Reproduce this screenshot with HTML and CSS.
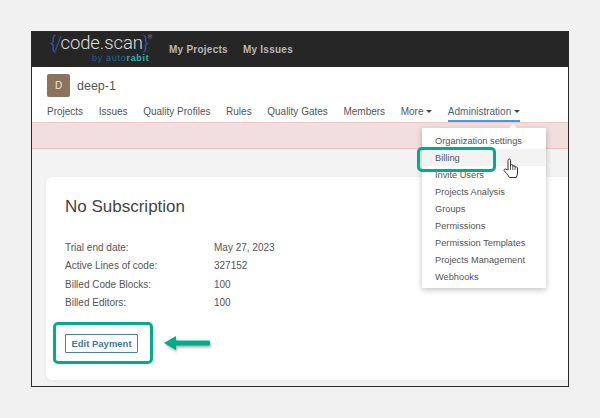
FILE: index.html
```html
<!DOCTYPE html>
<html>
<head>
    <meta charset="utf-8">
    <title>Billing</title>
    <link rel="stylesheet" href="styles.css">
</head>
<body>
    <div class="frame">
        <div class="topbar">
            <div class="logo">
                <div class="logo-main"><span class="brace">{</span><span class="brace">/</span>code.scan<span class="brace">}</span><sup>®</sup></div>
                <div class="logo-sub">by <span class="auto">auto</span><span class="rabit">rabit</span></div>
            </div>
            <a class="top-link">My Projects</a>
            <a class="top-link">My Issues</a>
        </div>

        <div class="org-header">
            <div class="org-title">
                <span class="avatar">D</span>
                <span class="org-name">deep-1</span>
            </div>
            <nav class="org-nav">
                <a>Projects</a>
                <a>Issues</a>
                <a>Quality Profiles</a>
                <a>Rules</a>
                <a>Quality Gates</a>
                <a>Members</a>
                <a>More <i class="caret"></i></a>
                <a class="active">Administration <i class="caret"></i></a>
            </nav>
        </div>

        <div class="banner"></div>

        <div class="content">
            <div class="card">
                <h2>No Subscription</h2>
                <dl class="info">
                    <dt>Trial end date:</dt><dd>May 27, 2023</dd>
                    <dt>Active Lines of code:</dt><dd>327152</dd>
                    <dt>Billed Code Blocks:</dt><dd>100</dd>
                    <dt>Billed Editors:</dt><dd>100</dd>
                </dl>
                <button class="edit-btn">Edit Payment</button>
            </div>
        </div>

        <div class="menu-tip"></div>
        <ul class="menu">
            <li>Organization settings</li>
            <li class="hover">Billing</li>
            <li>Invite Users</li>
            <li>Projects Analysis</li>
            <li>Groups</li>
            <li>Permissions</li>
            <li>Permission Templates</li>
            <li>Projects Management</li>
            <li>Webhooks</li>
        </ul>
    </div>

    <!-- annotations on top of the screenshot -->
    <div class="mark mark-billing"></div>
    <div class="mark mark-edit"></div>

    <svg class="arrow" width="50" height="20" viewBox="0 0 50 20">
        <path d="M1 9 L13 2 L13 6.500 L46.500 6.500 Q48 9 46.500 11.500 L13 11.500 L13 16 Z" fill="#00ac8c"/>
    </svg>

    <svg class="cursor" width="16" height="21" viewBox="0 0 16 21">
        <path d="M5 12 L5 2.500 Q5 1 6.300 1 Q7.500 1 7.500 2.500 L7.500 8 L7.500 6.800 Q8.700 6 9.800 7 L9.800 8.200 Q11 7.200 12 8.300 L12 9 Q13.500 8.400 14.500 9.700 L14.500 15 Q14.500 17 13.200 19.500 L6.300 19.500 Q5.500 17.500 3.500 15.500 L1 12.500 Q1 10.800 2.800 11 Z" fill="#fff" stroke="#333" stroke-width="1" stroke-linejoin="round"/>
        <path d="M7.500 8 V12 M9.800 8 V12 M12 9 V12" fill="none" stroke="#333" stroke-width="0.800"/>
    </svg>
</body>
</html>
```

FILE: styles.css
```css
html, body {
    margin: 0;
    height: 100%;
}

body {
    position: relative;
    width: 600px;
    height: 418px;
    overflow: hidden;
    background-color: #f1f1f1;
    font-family: "Liberation Sans", Arial, sans-serif;
    color: #444;
}

.frame {
    position: absolute;
    left: 31px;
    top: 31px;
    width: 536px;
    height: 354px;
    border: 1px solid #2b2b2b;
    background-color: #f3f3f3;
    overflow: hidden;
    display: flex;
    flex-direction: column;
}

/* top bar */
.topbar {
    height: 35px;
    flex: none;
    display: flex;
    align-items: center;
    background-color: #262626;
    padding-left: 18px;
}

.logo {
    width: 119px;
    color: #dedede;
}

.logo-main {
    font-family: Roboto, "Liberation Sans", sans-serif;
    font-size: 18.500px;
    font-weight: 300;
    line-height: 19px;
    margin-top: -2px;
    letter-spacing: -0.1px;
    white-space: nowrap;
}

.logo-main sup {
    font-size: 6px;
    line-height: 0;
    vertical-align: 10px;
    color: #bbb;
}

.brace {
    color: #3260b8;
    letter-spacing: -1.500px;
}

.logo-sub {
    font-size: 9px;
    line-height: 9px;
    letter-spacing: 0.7px;
    margin-left: 42px;
    margin-top: 1px;
    color: #1d5a8c;
    white-space: nowrap;
}

.auto {
    color: #1d6a94;
}

.rabit {
    color: #2cb5b0;
    font-weight: bold;
}

.top-link {
    font-size: 10px;
    font-weight: bold;
    color: #b9b9b9;
    letter-spacing: 0.25px;
    margin-right: 15px;
}

/* organization header */
.org-header {
    height: 55px;
    flex: none;
    background-color: #fff;
    padding-left: 15px;
    box-sizing: border-box;
}

.org-title {
    display: flex;
    align-items: center;
    padding-top: 7px;
    height: 23px;
}

.avatar {
    width: 23px;
    height: 23px;
    border-radius: 2px;
    background-color: #8d735e;
    color: #f3e9df;
    font-size: 10px;
    line-height: 23px;
    text-align: center;
}

.org-name {
    margin-left: 7px;
    font-size: 12.500px;
    color: #555;
}

.org-nav {
    display: flex;
    gap: 15.600px;
    margin-top: 6px;
    font-size: 10px;
    line-height: 17px;
    color: #555;
}

.org-nav a {
    display: block;
    height: 17px;
}

.org-nav .active {
    color: #4b5e75;
    border-bottom: 2px solid #4b96d8;
}

.caret {
    display: inline-block;
    width: 0;
    height: 0;
    vertical-align: 2px;
    border-left: 3px solid transparent;
    border-right: 3px solid transparent;
    border-top: 3px solid #444;
}

.banner {
    height: 25px;
    flex: none;
    background-color: #f2dede;
    border-top: 1px solid #ecc8c8;
    border-bottom: 1px solid #f0c0c0;
}

/* billing card */
.content {
    flex: 1;
    padding: 28px 0 0 14px;
}

.card {
    height: 203px;
    box-sizing: border-box;
    margin-right: -8px;
    padding: 19px 19px;
    background-color: #fff;
    border-radius: 6px;
    box-shadow: 0 1px 4px rgba(0, 0, 0, 0.06);
}

.card h2 {
    margin: 0;
    font-size: 17px;
    font-weight: normal;
    line-height: 22px;
    color: #444;
}

.info {
    display: grid;
    grid-template-columns: 149px auto;
    grid-auto-rows: 18.300px;
    margin: 21px 0 0 0;
    font-size: 10px;
    line-height: 18px;
    color: #555;
}

.info dd {
    margin: 0;
}

.edit-btn {
    display: block;
    width: 73px;
    height: 19px;
    margin-top: 22px;
    padding: 0;
    background-color: #fff;
    border: 1px solid #4b7fa8;
    border-radius: 1px;
    color: #3f78a6;
    font-family: "Liberation Sans", Arial, sans-serif;
    font-size: 9.500px;
    font-weight: bold;
}

/* administration menu */
.menu {
    position: absolute;
    left: 390px;
    top: 96px;
    width: 124px;
    margin: 0;
    padding: 4px 0 3px;
    list-style: none;
    background-color: #fff;
    box-shadow: 0 2px 6px rgba(0, 0, 0, 0.25);
    font-size: 9.250px;
    line-height: 18px;
    color: #555;
}

.menu li {
    padding-left: 13px;
    height: 17px;
    white-space: nowrap;
}

.menu .hover {
    background-color: #f3f3f3;
}

.menu-tip {
    position: absolute;
    left: 477px;
    top: 92px;
    width: 0;
    height: 0;
    border-left: 4px solid transparent;
    border-right: 4px solid transparent;
    border-bottom: 4px solid #fff;
}

/* green annotations */
.mark {
    position: absolute;
    box-sizing: border-box;
    border: 3px solid #00ac8c;
    border-radius: 5px;
}

.mark-billing {
    left: 417px;
    top: 147px;
    width: 79px;
    height: 25px;
}

.mark-edit {
    left: 53px;
    top: 322px;
    width: 100px;
    height: 42px;
}

.arrow {
    position: absolute;
    left: 163px;
    top: 334px;
    filter: drop-shadow(1px 2px 1px rgba(0, 0, 0, 0.3));
}

.cursor {
    position: absolute;
    left: 503px;
    top: 158px;
}
```
